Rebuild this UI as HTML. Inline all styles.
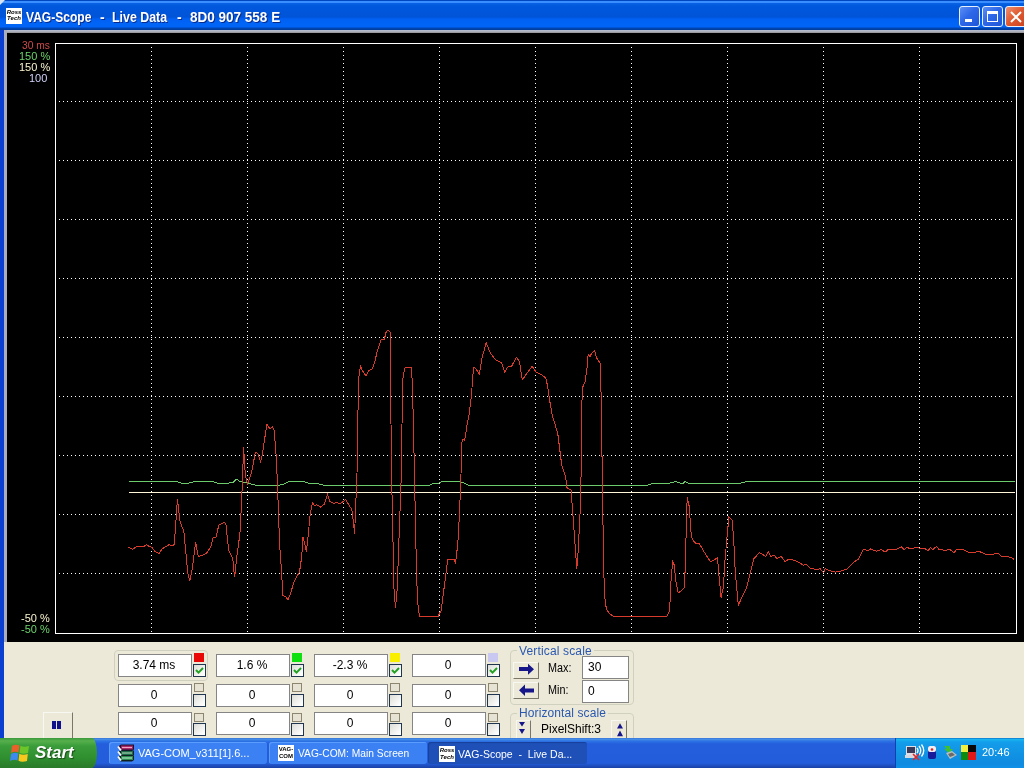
<!DOCTYPE html>
<html><head><meta charset="utf-8">
<style>
*{box-sizing:border-box;}
html,body{margin:0;padding:0;}
body{will-change:transform;width:1024px;height:768px;overflow:hidden;position:relative;background:#ECE9D8;font-family:"Liberation Sans",sans-serif;}
.abs{position:absolute;}
#title{left:0;top:0;width:1024px;height:30px;background:linear-gradient(to bottom,#0047C0 0px,#0047C0 1px,#3A8EFF 1px,#3A8EFF 3px,#0A62E4 3px,#0058DC 6px,#0054D8 17px,#0060F4 19px,#0064F6 23px,#0064F8 27px,#0046B4 28px,#003C9C 30px);}
.tt{position:absolute;top:9px;color:#fff;font-weight:bold;font-size:14px;line-height:16px;white-space:pre;text-shadow:1px 1px 0 #0A2A8A;transform-origin:0 0;}
#ticon{left:6px;top:8px;width:16px;height:16px;background:#fff;font:italic bold 6px/6px "Liberation Sans",sans-serif;color:#000;text-align:center;padding-top:1px;}
.tbtn{top:6px;width:21px;height:21px;border:1px solid #E6F0FF;border-radius:3px;background:linear-gradient(135deg,#5C8EF4 0%,#2E68E8 45%,#1E56D8 100%);}
#lborder{left:0;top:30px;width:4px;height:708px;background:#0B3FD0;}
#grayline{left:4px;top:30px;width:1020px;height:3px;background:linear-gradient(to bottom,#B8C0D4,#A8ABB4 2px,#8C8C8C 3px);}
#lgray{left:4px;top:30px;width:3px;height:612px;background:#A8AEC0;}
#black{left:7px;top:33px;width:1017px;height:609px;background:#000;}
svg{position:absolute;left:0;top:0;}
.lab{position:absolute;font-size:11px;line-height:11px;white-space:pre;text-align:right;}
/* panel */
.tb{position:absolute;background:#fff;border:1px solid #858585;font-size:12px;color:#000;text-align:center;line-height:21px;padding-right:2px;}
.sq{position:absolute;width:10px;height:9px;}
.cb{position:absolute;width:13px;height:13px;border:1px solid #1F3550;background:linear-gradient(135deg,#DCDCD7 0%,#FFFFFF 90%);}
.grp{position:absolute;border:1px solid #D0D0BF;border-radius:4px;}
.glabel{position:absolute;color:#2A58B0;font-size:12px;line-height:12px;background:#ECE9D8;padding:0 2px;white-space:pre;}
.btn{position:absolute;background:#ECE9D8;border:1px solid #F8F8F2;border-right-color:#7A776A;border-bottom-color:#7A776A;}
/* taskbar */
#taskbar{left:0;top:738px;width:1024px;height:30px;background:linear-gradient(to bottom,#3168D5 0px,#4993E6 1px,#2D73E6 3px,#245EDC 6px,#245DDB 25px,#1941A5 30px);}
#start{left:0;top:738px;width:97px;height:30px;border-radius:0 5px 5px 0 / 0 15px 15px 0;background:linear-gradient(to bottom,#3C9A3C 0px,#56B04C 3px,#3A9C3A 8px,#2F8F2F 20px,#2A7A2A 30px);}
.task{position:absolute;top:742px;height:22px;border-radius:3px;background:#3C81F3;box-shadow:inset 1px 1px 0 #5C9CFF;}
.tlab{position:absolute;top:0;color:#fff;font-size:11px;line-height:22px;white-space:pre;transform-origin:0 0;}
#tray{left:895px;top:738px;width:129px;height:30px;background:linear-gradient(to bottom,#0C59B9 0px,#19B9F3 1px,#139DEA 4px,#0F8BE0 25px,#1090E8 30px);border-left:1px solid #1042AF;}
</style></head>
<body>
<div id="title" class="abs"></div>
<svg width="6" height="6" style="left:0;top:0;"><path d="M0 0h5l-5 5z" fill="#D8E4F4"/></svg>
<div id="ticon" class="abs">Ross<br>Tech</div>
<div class="tt" style="left:26px;transform:scaleX(0.86);">VAG-Scope</div>
<div class="tt" style="left:100px;">-</div>
<div class="tt" style="left:112px;transform:scaleX(0.885);">Live Data</div>
<div class="tt" style="left:177px;">-</div>
<div class="tt" style="left:190px;transform:scaleX(0.965);">8D0 907 558 E</div>
<div class="abs tbtn" style="left:959px;"><div class="abs" style="left:5px;top:12px;width:7px;height:3px;background:#fff;"></div></div>
<div class="abs tbtn" style="left:982px;"><div class="abs" style="left:4px;top:4px;width:11px;height:11px;border:1px solid #fff;border-top-width:3px;"></div></div>
<div class="abs tbtn" style="left:1005px;width:24px;background:linear-gradient(135deg,#F09070 0%,#E05A30 45%,#C8401C 100%);">
 <svg width="19" height="19" style="left:4px;top:4px;"><path d="M1 1 L11 11 M11 1 L1 11" stroke="#fff" stroke-width="2"/></svg>
</div>
<div id="lborder" class="abs"></div>
<div id="grayline" class="abs"></div>
<div id="lgray" class="abs"></div>
<div id="black" class="abs"></div>

<svg width="1024" height="768" viewBox="0 0 1024 768">
 <g stroke="#FFFFFF" stroke-width="1" stroke-dasharray="1 3" shape-rendering="crispEdges">
<line x1="151.5" y1="47" x2="151.5" y2="633" />
<line x1="247.5" y1="47" x2="247.5" y2="633" />
<line x1="343.5" y1="47" x2="343.5" y2="633" />
<line x1="439.5" y1="47" x2="439.5" y2="633" />
<line x1="535.5" y1="47" x2="535.5" y2="633" />
<line x1="631.5" y1="47" x2="631.5" y2="633" />
<line x1="727.5" y1="47" x2="727.5" y2="633" />
<line x1="823.5" y1="47" x2="823.5" y2="633" />
<line x1="919.5" y1="47" x2="919.5" y2="633" />
<line x1="59" y1="101.5" x2="1013" y2="101.5" />
<line x1="59" y1="160.5" x2="1013" y2="160.5" />
<line x1="59" y1="219.5" x2="1013" y2="219.5" />
<line x1="59" y1="278.5" x2="1013" y2="278.5" />
<line x1="59" y1="337.5" x2="1013" y2="337.5" />
<line x1="59" y1="396.5" x2="1013" y2="396.5" />
<line x1="59" y1="455.5" x2="1013" y2="455.5" />
<line x1="59" y1="514.5" x2="1013" y2="514.5" />
<line x1="59" y1="573.5" x2="1013" y2="573.5" />
 </g>
 <rect x="55.5" y="43.5" width="961" height="590" fill="none" stroke="#FFFFFF" stroke-width="1" shape-rendering="crispEdges"/>
 <line x1="128.6" y1="492.5" x2="1015" y2="492.5" stroke="#FFF6D8" stroke-width="1" shape-rendering="crispEdges"/>
 <polyline points="128.5,481.5 177.5,481.5 178.5,482.5 180.5,482.5 181.5,483.5 188.5,483.5 189.5,482.5 192.5,482.5 193.5,481.5 213.5,481.5 214.5,482.5 216.5,482.5 217.5,483.5 228.5,483.5 229.5,482.5 233.5,482.5 234.5,480.5 235.0,480.5 236.0,479.5 237.5,479.5 238.5,480.5 238.5,480.5 239.5,481.5 242.5,481.5 243.5,482.5 247.5,482.5 248.5,483.5 250.5,483.5 251.5,484.5 254.5,484.5 255.5,485.5 279.5,485.5 280.5,484.5 283.5,484.5 284.5,483.5 285.5,483.5 286.5,482.5 287.5,482.5 288.5,481.5 304.5,481.5 305.5,482.5 307.5,482.5 308.5,483.5 318.5,483.5 319.5,484.5 322.5,484.5 323.5,485.5 429.5,485.5 430.5,484.5 431.5,484.5 432.5,483.5 438.5,483.5 439.5,482.5 440.5,482.5 441.5,481.5 460.5,481.5 461.5,482.5 463.5,482.5 464.5,483.5 465.5,483.5 466.5,484.5 467.5,484.5 468.5,485.5 647.5,485.5 648.5,484.5 650.5,484.5 651.5,483.5 669.5,483.5 670.5,482.5 673.5,482.5 674.5,481.5 676.5,481.5 677.5,482.5 679.5,482.5 680.5,483.5 683.5,483.5 684.5,481.5 685.5,481.5 686.5,482.5 687.5,482.5 688.5,483.5 740.5,483.5 741.5,482.5 744.5,482.5 745.5,481.5 1014.5,481.5 1014.5,481.5" fill="none" stroke="#6CCC6C" stroke-width="1" shape-rendering="crispEdges"/>
 <polyline points="128.6,547.3 132.5,549.2 137,546.6 143.5,546.6 146.8,544.7 149.4,546.6 152,547.3 154.6,551.2 159.2,553.8 161.8,549.2 165.7,546.6 168.9,544.7 172.2,546 174.1,544.7 175.4,529 177.4,499.1 180,521.25 183.9,531.7 187.8,573.3 189.75,581.1 192.4,568.1 195.6,542.1 198.2,556.4 201.9,555.6 207.1,552.7 211.2,545.7 213,538 215.9,537.5 218.8,525.2 221.2,524 224.1,522.3 225.9,523.4 227,535.1 228.8,550.4 231.1,555 232.9,559.7 234.1,572.6 234.7,577.3 236.4,559.7 239.9,534 241.7,500 243.6,447.2 245.4,475.9 247.7,484.1 251.2,473.6 253.6,461.9 255.3,452.5 257.7,453.1 260.6,461.9 262.4,454.8 264.7,438.4 267,424.4 270,429 272.3,426.7 274.1,430.2 275.8,450.1 277,473.6 278.2,505 279.6,545 281.5,570 282.4,587.4 282.8,595.6 285.6,596.5 287.9,599.7 290.6,593.8 293.3,583.8 295.6,578.3 299.2,572.8 300.6,565.5 302,551.9 303,536.7 305.4,546.1 306.3,551.7 307.7,540.5 310,516.1 312.4,502.5 314.3,505.3 317.1,504.9 320.4,507.2 324.1,504.4 326,499.25 327.4,494.6 329.7,501.1 333.5,503.5 336.3,502.5 340,503.5 343.3,501.6 345.7,499.7 348.5,504.4 351.8,509.6 353.2,519.9 354.6,533.9 355.5,511.4 357.5,460 358.3,381.9 359.6,371.9 360.6,365.3 361.6,369.3 363.6,372.6 366,375.6 368.6,370.6 371.9,369.3 373.6,365.9 375.2,360 377.6,350 379.8,344 380.5,340.2 381.6,339.3 384,339.6 385.4,335.3 386.3,331.2 387.9,330.3 389.7,331.5 390.4,333.4 390.5,377.2 391.5,470 394,588.8 395.5,608 397.2,588.8 401.5,470 402.5,380.5 404.5,369.3 405.5,367.3 411.8,367.3 412.1,382.5 412.8,400 414.4,470 416.6,578 418.3,610.3 419.8,616.5 438,616.5 441.2,610.3 446.4,570 447.7,559.3 454.1,559.3 455.5,562.9 456.4,556.5 457.8,542.8 458.7,530 459.6,509.1 460.5,490 462.1,439.4 464.7,440.4 466.6,427.7 469.5,412 471.5,394.5 473.5,367.1 475.4,368.1 479.3,374 482.2,357.4 486.2,342.7 488.1,347.6 490.1,352.5 495,359.3 501.8,363.2 504.7,372 507.7,367.1 511.6,366.2 516.4,357.4 519.4,361.3 522.3,379.8 527.2,373 532.1,366.2 536,372 541.9,375 545.8,377.9 547.7,386.7 550,402.5 552,414.2 557.8,433.7 561.7,465 565.6,476.7 567.1,488.2 569.1,489.2 571.1,490.2 575.2,546.6 576.8,568.8 578.2,550.7 580.2,510.3 581.2,470 581.2,414.2 582.8,386.9 585.1,382 587.1,367.3 588.1,354.6 590,356.6 592,352.7 594.5,350.7 596.9,358.5 600.4,363.4 601.2,400.5 602.3,476.7 603.4,550.7 604.4,595 606.4,609.2 609.5,613.6 613.5,616.5 666.9,616.5 669.6,611.2 671,581 672.6,561.8 674.1,564.8 676.1,583 678.2,593 682.2,590 684.6,587 685.8,544.6 687.2,497.2 689.2,506.3 691.3,536.6 693.3,540.6 696.3,543.6 699.3,543.6 703.4,550.7 710.4,561.8 714.5,559.8 717.5,557.7 718.75,572.8 721.1,597.8 723.4,586.9 725,560.3 727.3,533.75 728.9,517.3 732,519.7 733.6,536.9 735.2,571.25 738.3,605.6 742.2,596.25 746.9,586.9 750.8,571.25 753.9,558.75 759.4,552.5 765.9,556.4 768.1,551.7 771,556.4 773.9,554.9 776.9,558.6 781.3,556.4 784.9,561.5 788.6,559.3 793,560 798.8,562.2 803.2,565.2 806.2,564.4 810.6,568.4 816.4,569.5 820.1,568.8 823.7,572.5 825.2,568.8 831.1,571 835.5,572.2 841.3,571 847.2,568.8 853,563 858.9,558.6 863.3,549 867.7,550.5 870.6,549 876.5,551.2 881.7,549.6 885.1,552.1 888.5,549.2 895.3,549.6 897.4,548.7 901.6,547 904.2,549.6 906.7,547.5 910.9,548.7 916,547.5 920.2,548.2 925.3,548.7 927.9,550.9 930.4,547.5 933,549.6 936.3,546.5 938.9,549.2 944.8,550.4 949.9,549.6 954.1,552.6 956.6,549.6 963.4,549.6 968.5,552.1 973.6,552.6 978.6,551.2 983.7,553.3 986.2,554.6 992.2,554.3 998.1,553.1 1001.5,556.3 1005.7,556.7 1010.8,557.2 1014.2,559.4" fill="none" stroke="#D83A2C" stroke-width="1" shape-rendering="crispEdges"/>
</svg>

<div class="lab" style="left:20px;top:40px;color:#D04A4A;transform:scaleX(0.93);transform-origin:30px 0;">30 ms</div>
<div class="lab" style="left:19px;top:51px;color:#6CD46C;">150 %</div>
<div class="lab" style="left:19px;top:62px;color:#FAF4D0;">150 %</div>
<div class="lab" style="left:29px;top:73px;color:#D0D0FA;">100</div>
<div class="lab" style="left:21px;top:613px;color:#FAF4D0;">-50 %</div>
<div class="lab" style="left:21px;top:624px;color:#6CD46C;">-50 %</div>

<!-- panel -->
<div class="grp" style="left:114px;top:650px;width:94px;height:31px;"></div>
<div class="tb" style="left:118px;top:654px;width:74px;height:23px;">3.74 ms</div>
<div class="sq" style="left:194px;top:653px;background:#E80808;"></div>
<div class="cb" style="left:193px;top:664px;"><svg width="13" height="13" style="left:-1px;top:-1px;"><path d="M3 6l2.5 2.6L10 4" stroke="#21A121" stroke-width="2" fill="none"/></svg></div>
<div class="tb" style="left:118px;top:684px;width:74px;height:23px;">0</div>
<div class="sq" style="left:194px;top:683px;border:1px solid #8C8670;background:#E6E2D4;"></div>
<div class="cb" style="left:193px;top:694px;"></div>
<div class="tb" style="left:118px;top:712px;width:74px;height:23px;">0</div>
<div class="sq" style="left:194px;top:713px;border:1px solid #8C8670;background:#E6E2D4;"></div>
<div class="cb" style="left:193px;top:723px;"></div>
<div class="tb" style="left:216px;top:654px;width:74px;height:23px;">1.6 %</div>
<div class="sq" style="left:292px;top:653px;background:#10E010;"></div>
<div class="cb" style="left:291px;top:664px;"><svg width="13" height="13" style="left:-1px;top:-1px;"><path d="M3 6l2.5 2.6L10 4" stroke="#21A121" stroke-width="2" fill="none"/></svg></div>
<div class="tb" style="left:216px;top:684px;width:74px;height:23px;">0</div>
<div class="sq" style="left:292px;top:683px;border:1px solid #8C8670;background:#E6E2D4;"></div>
<div class="cb" style="left:291px;top:694px;"></div>
<div class="tb" style="left:216px;top:712px;width:74px;height:23px;">0</div>
<div class="sq" style="left:292px;top:713px;border:1px solid #8C8670;background:#E6E2D4;"></div>
<div class="cb" style="left:291px;top:723px;"></div>
<div class="tb" style="left:314px;top:654px;width:74px;height:23px;">-2.3 %</div>
<div class="sq" style="left:390px;top:653px;background:#F8F000;"></div>
<div class="cb" style="left:389px;top:664px;"><svg width="13" height="13" style="left:-1px;top:-1px;"><path d="M3 6l2.5 2.6L10 4" stroke="#21A121" stroke-width="2" fill="none"/></svg></div>
<div class="tb" style="left:314px;top:684px;width:74px;height:23px;">0</div>
<div class="sq" style="left:390px;top:683px;border:1px solid #8C8670;background:#E6E2D4;"></div>
<div class="cb" style="left:389px;top:694px;"></div>
<div class="tb" style="left:314px;top:712px;width:74px;height:23px;">0</div>
<div class="sq" style="left:390px;top:713px;border:1px solid #8C8670;background:#E6E2D4;"></div>
<div class="cb" style="left:389px;top:723px;"></div>
<div class="tb" style="left:412px;top:654px;width:74px;height:23px;">0</div>
<div class="sq" style="left:488px;top:653px;background:#C8C8F0;"></div>
<div class="cb" style="left:487px;top:664px;"><svg width="13" height="13" style="left:-1px;top:-1px;"><path d="M3 6l2.5 2.6L10 4" stroke="#21A121" stroke-width="2" fill="none"/></svg></div>
<div class="tb" style="left:412px;top:684px;width:74px;height:23px;">0</div>
<div class="sq" style="left:488px;top:683px;border:1px solid #8C8670;background:#E6E2D4;"></div>
<div class="cb" style="left:487px;top:694px;"></div>
<div class="tb" style="left:412px;top:712px;width:74px;height:23px;">0</div>
<div class="sq" style="left:488px;top:713px;border:1px solid #8C8670;background:#E6E2D4;"></div>
<div class="cb" style="left:487px;top:723px;"></div>
<div class="grp" style="left:510px;top:650px;width:124px;height:55px;"></div>
<div class="glabel" style="left:517px;top:645px;letter-spacing:0.15px;">Vertical scale</div>
<div class="btn" style="left:513px;top:662px;width:26px;height:17px;"><svg width="26" height="17" style="left:-1px;top:-1px;"><path d="M6 5h9v-3.3l6 5.5-6 5.5v-3.7h-9z" fill="#16168A"/></svg></div>
<div class="btn" style="left:513px;top:682px;width:26px;height:17px;"><svg width="26" height="17" style="left:-1px;top:-1px;"><path d="M21 6.5h-9v-4l-6 5.8 6 5.8v-3.6h9z" fill="#16168A"/></svg></div>
<div class="abs" style="left:548px;top:661px;font-size:12px;transform:scaleX(0.9);transform-origin:0 0;">Max:</div>
<div class="abs" style="left:548px;top:683px;font-size:12px;transform:scaleX(0.9);transform-origin:0 0;">Min:</div>
<div class="tb" style="left:582px;top:656px;width:47px;height:23px;text-align:left;padding-left:5px;">30</div>
<div class="tb" style="left:582px;top:680px;width:47px;height:23px;text-align:left;padding-left:5px;">0</div>
<div class="grp" style="left:510px;top:713px;width:124px;height:40px;"></div>
<div class="glabel" style="left:517px;top:707px;letter-spacing:0.1px;">Horizontal scale</div>
<div class="btn" style="left:516px;top:720px;width:15px;height:19px;"><svg width="15" height="19" style="left:-1px;top:-1px;"><path d="M3 2h6l-3 4.5z M3 9h6l-3 5z" fill="#16168A"/></svg></div>
<div class="btn" style="left:611px;top:720px;width:16px;height:19px;"><svg width="16" height="19" style="left:-1px;top:-1px;"><path d="M9 3.3l3 5.2h-6z M9 10.4l3 5.8h-6z" fill="#16168A"/></svg></div>
<div class="abs" style="left:541px;top:722px;font-size:12px;">PixelShift:3</div>

<div class="btn" style="left:43px;top:712px;width:30px;height:27px;"></div>
<div class="abs" style="left:52px;top:721px;width:4px;height:8px;background:#10108A;box-shadow:0 0 1px #C8C8F0;"></div>
<div class="abs" style="left:57px;top:721px;width:4px;height:8px;background:#10108A;box-shadow:0 0 1px #C8C8F0;"></div>

<!-- taskbar -->
<div id="taskbar" class="abs"></div>
<div id="start" class="abs"></div>
<svg width="22" height="20" style="left:10px;top:743px;">
 <path d="M2 3 Q5 1 9.5 2.5 L8.5 9.5 Q5 8 1 10z" fill="#E8602A"/>
 <path d="M10.5 2.8 Q14 4.5 19 3 L18 10 Q13 11.5 9.5 9.8z" fill="#6CC62A"/>
 <path d="M1 11 Q5 9 8.3 10.5 L7.5 17.5 Q4 16 0 18z" fill="#3C8AF0"/>
 <path d="M9.3 10.8 Q13 12.5 17.8 11 L17 18 Q12 19.5 8.5 17.8z" fill="#F8C81E"/>
</svg>
<div class="abs" style="left:35px;top:743px;color:#fff;font:italic bold 17px/20px 'Liberation Sans',sans-serif;text-shadow:1px 1px 1px #1A4A1A;">Start</div>
<div class="task" style="left:109px;width:158px;"><span class="tlab" style="left:29px;">VAG-COM_v311[1].6...</span>
 <svg width="18" height="18" style="left:8px;top:2px;">
  <path d="M1 2.5L4 0.5h13v5l-2 1.5H3.5z" fill="#1A1030"/><path d="M4 1.5h12v4H4z" fill="#A02060"/><path d="M5 3.5h10" stroke="#F0A0C0" stroke-width="1.2"/>
  <path d="M1 7.5L3.5 6.5h13.5v4.5l-2 1.5H3.5z" fill="#0E2020"/><path d="M4 7h12v4H4z" fill="#1E6A4A"/><path d="M5 9h10" stroke="#A0D0B0" stroke-width="1.2"/>
  <path d="M1 12.5L3.5 11.5h13.5v4.5l-2 1.5H3.5z" fill="#0E2020"/><path d="M4 12h12v4H4z" fill="#2A8A50"/><path d="M5 14h10" stroke="#B0E8C0" stroke-width="1.2"/>
  <path d="M1 2.5l3 4 M1 7.5l3 4 M1 12.5l3 4" stroke="#fff" stroke-width="1.8"/>
 </svg></div>
<div class="task" style="left:269px;width:158px;"><span class="tlab" style="left:29px;transform:scaleX(0.93);">VAG-COM: Main Screen</span>
 <div class="abs" style="left:9px;top:3px;width:16px;height:16px;background:#fff;color:#000;font:bold 6px/7px 'Liberation Sans',sans-serif;text-align:center;padding-top:1px;">VAG-<br>COM</div></div>
<div class="task" style="left:428px;width:159px;background:#1F50B8;box-shadow:inset 1px 1px 1px #17409A;"><span class="tlab" style="left:30px;top:1px;transform:scaleX(0.955);">VAG-Scope  -  Live Da...</span>
 <div class="abs" style="left:11px;top:4px;width:16px;height:16px;background:#fff;color:#000;font:italic bold 6px/7px 'Liberation Sans',sans-serif;text-align:center;padding-top:1px;">Ross<br>Tech</div></div>
<div id="tray" class="abs"></div>
<svg width="20" height="18" style="left:905px;top:744px;">
 <rect x="1" y="2" width="10" height="9" fill="#E0E0E8"/><rect x="2" y="3" width="8" height="6" fill="#3A3A5A"/><rect x="0" y="11" width="12" height="3" fill="#D8D8E0"/>
 <path d="M12 4q2 2.5 0 5 M14 2q3.5 4.5 0 9 M16.5 0.5q4.5 6 0 12" stroke="#fff" stroke-width="1.3" fill="none"/>
 <path d="M8 10l6 6 M14 10l-6 6" stroke="#E02828" stroke-width="1.6"/>
</svg>
<svg width="10" height="15" style="left:927px;top:745px;">
 <rect x="1" y="1" width="8" height="13" rx="2" fill="#181C9A"/><rect x="1" y="1" width="8" height="6" rx="2" fill="#F0F0F4"/><circle cx="5" cy="4.5" r="1.3" fill="#E02020"/>
</svg>
<svg width="14" height="15" style="left:943px;top:745px;">
 <path d="M1 1h6v3h3l-4 4-5-4h3z" fill="#40C030"/><path d="M3 8l6-2 5 4-7 4z" fill="#B8C0C0"/><path d="M5 9l4-1.5 3 2.5-5 2z" fill="#6A6A6A"/>
</svg>
<svg width="15" height="15" style="left:961px;top:745px;">
 <rect x="0" y="0" width="7" height="7" fill="#F0F040"/><rect x="7" y="0" width="8" height="7" fill="#080808"/><rect x="0" y="7" width="7" height="8" fill="#108A10"/><rect x="7" y="7" width="8" height="8" fill="#E01818"/>
</svg>
<div class="abs" style="left:982px;top:746px;color:#fff;font-size:11px;line-height:13px;">20:46</div>
</body></html>
